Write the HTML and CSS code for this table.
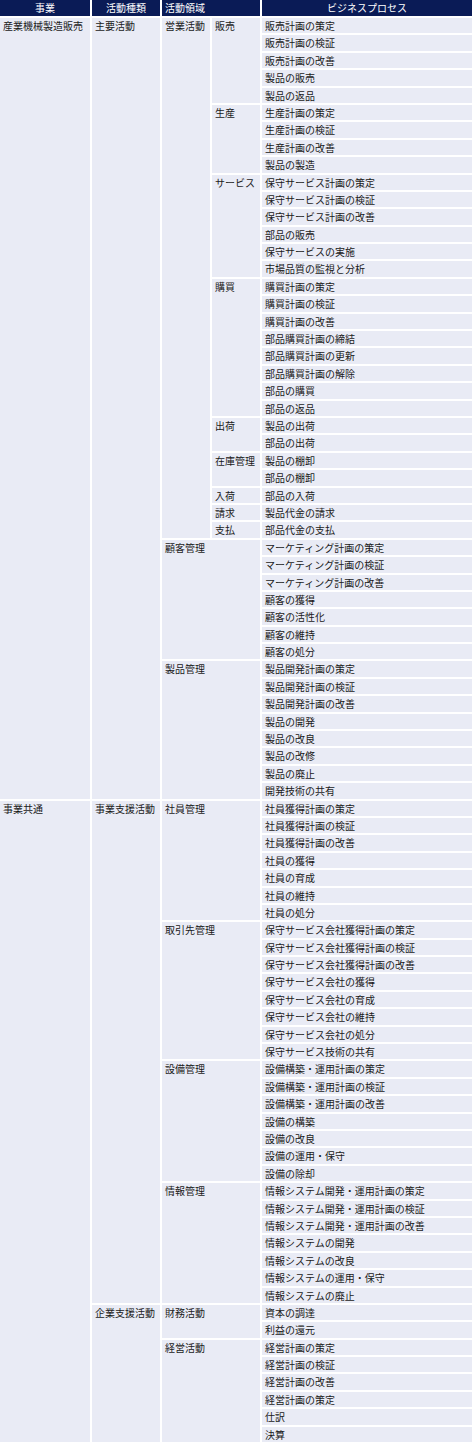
FILE: index.html
```html
<!DOCTYPE html>
<html lang="ja">
<head>
<meta charset="utf-8">
<title>ビジネスプロセス</title>
<link rel="stylesheet" href="styles.css">
</head>
<body>
<div class="grid">
  <div class="hd center">事業</div>
  <div class="hd center">活動種類</div>
  <div class="hd wide">活動領域</div>
  <div class="hd center">ビジネスプロセス</div>

  <div class="c c1 r45">産業機械製造販売</div>
  <div class="c c2 r45">主要活動</div>
  <div class="c c3 r30">営業活動</div>
  <div class="c c4 r5">販売</div>
  <div class="c c5">販売計画の策定</div>
  <div class="c c5">販売計画の検証</div>
  <div class="c c5">販売計画の改善</div>
  <div class="c c5">製品の販売</div>
  <div class="c c5">製品の返品</div>
  <div class="c c4 r4">生産</div>
  <div class="c c5">生産計画の策定</div>
  <div class="c c5">生産計画の検証</div>
  <div class="c c5">生産計画の改善</div>
  <div class="c c5">製品の製造</div>
  <div class="c c4 r6">サービス</div>
  <div class="c c5">保守サービス計画の策定</div>
  <div class="c c5">保守サービス計画の検証</div>
  <div class="c c5">保守サービス計画の改善</div>
  <div class="c c5">部品の販売</div>
  <div class="c c5">保守サービスの実施</div>
  <div class="c c5">市場品質の監視と分析</div>
  <div class="c c4 r8">購買</div>
  <div class="c c5">購買計画の策定</div>
  <div class="c c5">購買計画の検証</div>
  <div class="c c5">購買計画の改善</div>
  <div class="c c5">部品購買計画の締結</div>
  <div class="c c5">部品購買計画の更新</div>
  <div class="c c5">部品購買計画の解除</div>
  <div class="c c5">部品の購買</div>
  <div class="c c5">部品の返品</div>
  <div class="c c4 r2">出荷</div>
  <div class="c c5">製品の出荷</div>
  <div class="c c5">部品の出荷</div>
  <div class="c c4 r2">在庫管理</div>
  <div class="c c5">製品の棚卸</div>
  <div class="c c5">部品の棚卸</div>
  <div class="c c4">入荷</div>
  <div class="c c5">部品の入荷</div>
  <div class="c c4">請求</div>
  <div class="c c5">製品代金の請求</div>
  <div class="c c4">支払</div>
  <div class="c c5">部品代金の支払</div>
  <div class="c c34 r7">顧客管理</div>
  <div class="c c5">マーケティング計画の策定</div>
  <div class="c c5">マーケティング計画の検証</div>
  <div class="c c5">マーケティング計画の改善</div>
  <div class="c c5">顧客の獲得</div>
  <div class="c c5">顧客の活性化</div>
  <div class="c c5">顧客の維持</div>
  <div class="c c5">顧客の処分</div>
  <div class="c c34 r8">製品管理</div>
  <div class="c c5">製品開発計画の策定</div>
  <div class="c c5">製品開発計画の検証</div>
  <div class="c c5">製品開発計画の改善</div>
  <div class="c c5">製品の開発</div>
  <div class="c c5">製品の改良</div>
  <div class="c c5">製品の改修</div>
  <div class="c c5">製品の廃止</div>
  <div class="c c5">開発技術の共有</div>

  <div class="c c1 r37">事業共通</div>
  <div class="c c2 r29">事業支援活動</div>
  <div class="c c34 r7">社員管理</div>
  <div class="c c5">社員獲得計画の策定</div>
  <div class="c c5">社員獲得計画の検証</div>
  <div class="c c5">社員獲得計画の改善</div>
  <div class="c c5">社員の獲得</div>
  <div class="c c5">社員の育成</div>
  <div class="c c5">社員の維持</div>
  <div class="c c5">社員の処分</div>
  <div class="c c34 r8">取引先管理</div>
  <div class="c c5">保守サービス会社獲得計画の策定</div>
  <div class="c c5">保守サービス会社獲得計画の検証</div>
  <div class="c c5">保守サービス会社獲得計画の改善</div>
  <div class="c c5">保守サービス会社の獲得</div>
  <div class="c c5">保守サービス会社の育成</div>
  <div class="c c5">保守サービス会社の維持</div>
  <div class="c c5">保守サービス会社の処分</div>
  <div class="c c5">保守サービス技術の共有</div>
  <div class="c c34 r7">設備管理</div>
  <div class="c c5">設備構築・運用計画の策定</div>
  <div class="c c5">設備構築・運用計画の検証</div>
  <div class="c c5">設備構築・運用計画の改善</div>
  <div class="c c5">設備の構築</div>
  <div class="c c5">設備の改良</div>
  <div class="c c5">設備の運用・保守</div>
  <div class="c c5">設備の除却</div>
  <div class="c c34 r7">情報管理</div>
  <div class="c c5">情報システム開発・運用計画の策定</div>
  <div class="c c5">情報システム開発・運用計画の検証</div>
  <div class="c c5">情報システム開発・運用計画の改善</div>
  <div class="c c5">情報システムの開発</div>
  <div class="c c5">情報システムの改良</div>
  <div class="c c5">情報システムの運用・保守</div>
  <div class="c c5">情報システムの廃止</div>
  <div class="c c2 r8">企業支援活動</div>
  <div class="c c34 r2">財務活動</div>
  <div class="c c5">資本の調達</div>
  <div class="c c5">利益の還元</div>
  <div class="c c34 r6">経営活動</div>
  <div class="c c5">経営計画の策定</div>
  <div class="c c5">経営計画の検証</div>
  <div class="c c5">経営計画の改善</div>
  <div class="c c5">経営計画の策定</div>
  <div class="c c5">仕訳</div>
  <div class="c c5">決算</div>
</div>
</body>
</html>
```

FILE: styles.css
```css
html, body {
  margin: 0;
  padding: 0;
  background: #ffffff;
}

body {
  font-family: "Noto Sans CJK JP", "Noto Sans", sans-serif;
  font-size: 10px;
  color: #1a1a1a;
}

.grid {
  display: grid;
  width: 472px;
  grid-template-columns: 90px 68px 48px 48px 210px;
  grid-template-rows: 16px;
  grid-auto-rows: 15.4px;
  column-gap: 2px;
  row-gap: 2px;
  background: #ffffff;
}

.hd {
  background: #0a1b56;
  color: #ffffff;
  line-height: 16px;
  white-space: nowrap;
  padding-left: 3px;
}

.hd.center {
  text-align: center;
  padding-left: 0;
}

.hd.wide {
  grid-column: 3 / span 2;
}

.c {
  background: #e9ebf5;
  line-height: 15.4px;
  padding-left: 3px;
  white-space: nowrap;
  overflow: hidden;
}

.c1 { grid-column: 1; }
.c2 { grid-column: 2; }
.c3 { grid-column: 3; }
.c4 { grid-column: 4; }
.c34 { grid-column: 3 / span 2; }
.c5 { grid-column: 5; }

.r2 { grid-row-end: span 2; }
.r4 { grid-row-end: span 4; }
.r5 { grid-row-end: span 5; }
.r6 { grid-row-end: span 6; }
.r7 { grid-row-end: span 7; }
.r8 { grid-row-end: span 8; }
.r29 { grid-row-end: span 29; }
.r30 { grid-row-end: span 30; }
.r37 { grid-row-end: span 37; }
.r45 { grid-row-end: span 45; }
```
